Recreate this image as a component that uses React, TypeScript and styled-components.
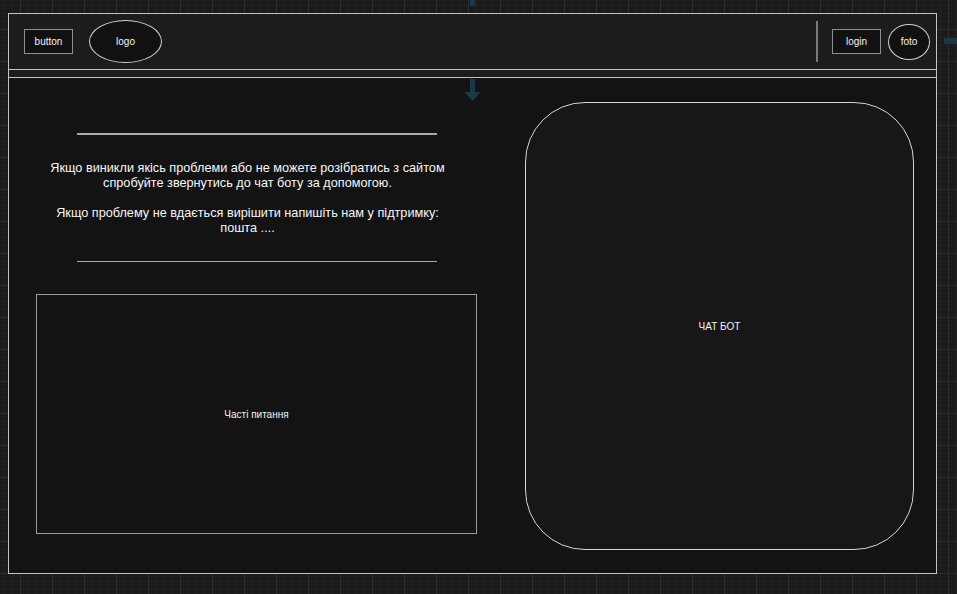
import React from 'react';
import styled, { createGlobalStyle } from 'styled-components';

const GlobalStyle = createGlobalStyle`
  html, body {
    margin: 0;
    padding: 0;
    background: #1b1b1b;
  }
  body {
    font-family: "Liberation Sans", Arial, sans-serif;
    color: #f2f2f2;
  }
`;

const Canvas = styled.div`
  position: relative;
  width: 957px;
  height: 594px;
  overflow: hidden;
  box-sizing: border-box;
  padding: 13px 0 0 8px;
  background-color: #1b1b1b;
  background-image:
    linear-gradient(to right, #2c2c2c 1px, transparent 1px),
    linear-gradient(to bottom, #2c2c2c 1px, transparent 1px),
    linear-gradient(to right, #222 1px, transparent 1px),
    linear-gradient(to bottom, #222 1px, transparent 1px);
  background-size: 32px 32px, 32px 32px, 8px 8px, 8px 8px;
  background-position: 20px 29px, 20px 29px, 20px 29px, 20px 29px;
`;

const Frame = styled.div`
  width: 929px;
  height: 561px;
  box-sizing: border-box;
  border: 1.5px solid #c4c4c4;
  background: #131313;
  display: flex;
  flex-direction: column;
`;

const Header = styled.header`
  height: 56px;
  box-sizing: border-box;
  background: #1c1c1c;
  border-bottom: 1.5px solid #c4c4c4;
  display: flex;
  align-items: center;
  padding: 0 6px 0 15px;
`;

const HeaderStrip = styled.div`
  height: 8px;
  box-sizing: border-box;
  background: #1c1c1c;
  border-bottom: 1.5px solid #c4c4c4;
`;

const BoxButton = styled.div`
  width: 49px;
  height: 25px;
  box-sizing: border-box;
  border: 1.5px solid #8f8f8f;
  background: #111;
  display: flex;
  align-items: center;
  justify-content: center;
  font-size: 10px;
`;

const Ellipse = styled.div<{ $w: number; $h: number }>`
  width: ${({ $w }) => $w}px;
  height: ${({ $h }) => $h}px;
  box-sizing: border-box;
  border: 1px solid #cfcfcf;
  border-radius: 50%;
  background: #111;
  display: flex;
  align-items: center;
  justify-content: center;
  font-size: 10px;
`;

const Spacer = styled.div`
  flex: 1;
`;

const VDivider = styled.div`
  width: 2px;
  height: 41px;
  background: #7a7a7a;
  margin-right: 14px;
`;

const Group = styled.div<{ $gap: number }>`
  display: flex;
  align-items: center;
  gap: ${({ $gap }) => $gap}px;
`;

const Body = styled.main`
  flex: 1;
  display: flex;
  gap: 48px;
  padding: 0 0 0 27px;
`;

const LeftCol = styled.section`
  width: 441px;
  display: flex;
  flex-direction: column;
  align-items: center;
`;

const HLine = styled.div<{ $top: number }>`
  width: 360px;
  height: 1.5px;
  background: #a9a9a9;
  margin-top: ${({ $top }) => $top}px;
`;

const Info = styled.div`
  margin: 26px 18px 0 0;
  text-align: center;
  font-size: 12.7px;
  line-height: 15px;
  color: #f7f7f7;
  white-space: nowrap;

  p {
    margin: 0;
  }
  p + p {
    margin-top: 15px;
  }
`;

const FaqBox = styled.div`
  margin-top: 32px;
  width: 441px;
  height: 240px;
  box-sizing: border-box;
  border: 1.5px solid #9a9a9a;
  display: flex;
  align-items: center;
  justify-content: center;
  font-size: 10px;
`;

const ChatBot = styled.div`
  margin-top: 24px;
  width: 389px;
  height: 448px;
  box-sizing: border-box;
  border: 1px solid #d6d6d6;
  border-radius: 60px;
  background: #171717;
  display: flex;
  align-items: center;
  justify-content: center;
  font-size: 10px;
`;

const Connector = styled.svg`
  position: absolute;
  left: 0;
  top: 0;
  pointer-events: none;
`;

export default function App() {
  return (
    <>
      <GlobalStyle />
      <Canvas>
        <Frame>
          <Header>
            <Group $gap={16}>
              <BoxButton>button</BoxButton>
              <Ellipse $w={73} $h={43}>logo</Ellipse>
            </Group>
            <Spacer />
            <VDivider />
            <Group $gap={7}>
              <BoxButton>login</BoxButton>
              <Ellipse $w={42} $h={36}>foto</Ellipse>
            </Group>
          </Header>
          <HeaderStrip />
          <Body>
            <LeftCol>
              <HLine $top={55} />
              <Info>
                <p>
                  Якщо виникли якісь проблеми або не можете розібратись з сайтом
                  <br />
                  спробуйте звернутись до чат боту за допомогою.
                </p>
                <p>
                  Якщо проблему не вдається вирішити напишіть нам у підтримку:
                  <br />
                  пошта ....
                </p>
              </Info>
              <HLine $top={25} />
              <FaqBox>Часті питання</FaqBox>
            </LeftCol>
            <ChatBot>ЧАТ БОТ</ChatBot>
          </Body>
        </Frame>
        <Connector width="957" height="594" viewBox="0 0 957 594">
          <g fill="#1f3b4b" opacity="0.9">
            <rect x="470" y="0" width="5" height="6" />
            <rect x="470" y="79" width="5" height="14" />
            <polygon points="464.5,92 480.5,92 472.5,101" />
            <rect x="944" y="38" width="13" height="6" />
          </g>
        </Connector>
      </Canvas>
    </>
  );
}
